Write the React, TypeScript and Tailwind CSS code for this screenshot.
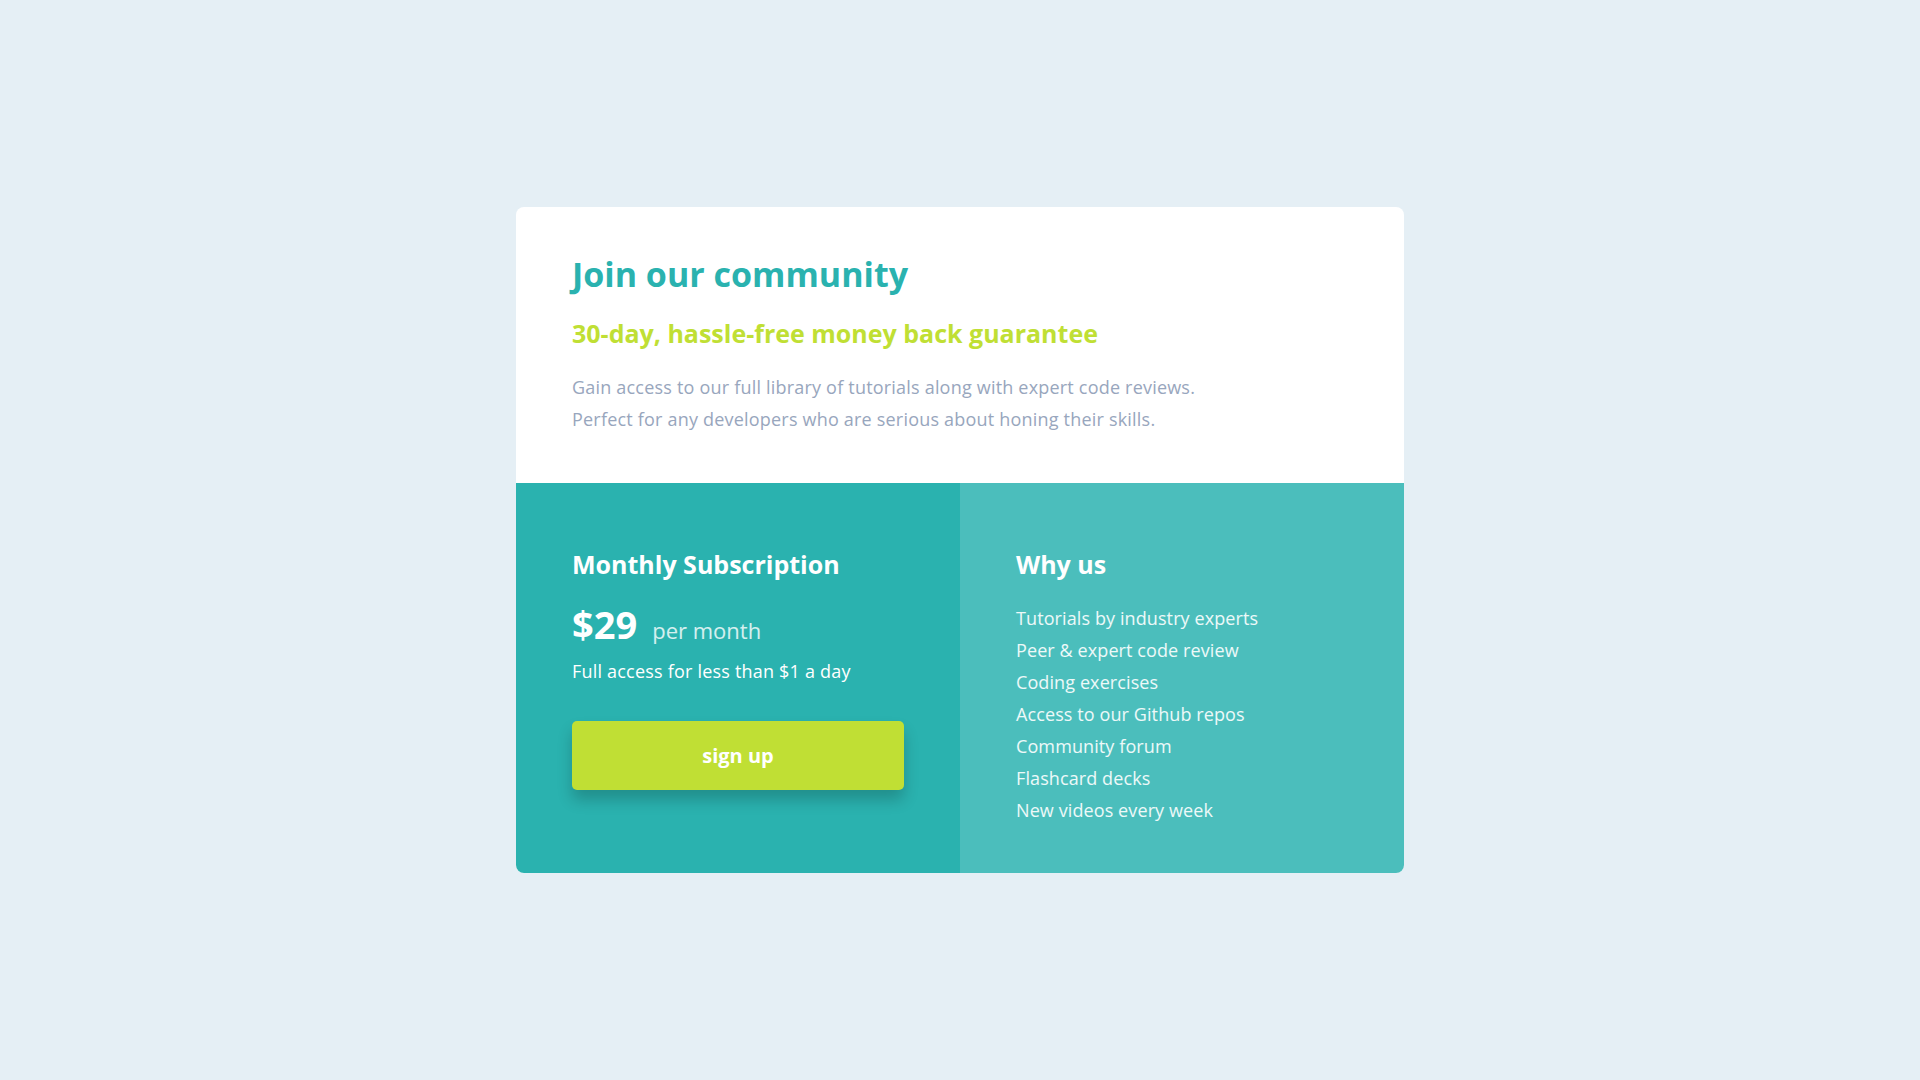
const features = [
  'Tutorials by industry experts',
  'Peer & expert code review',
  'Coding exercises',
  'Access to our Github repos',
  'Community forum',
  'Flashcard decks',
  'New videos every week',
];

const App = () => {
  return (
    <div className="flex min-h-screen justify-center bg-[#e5eff5] pt-[207px] font-['Open_Sans',sans-serif]">
      <div className="h-[666px] w-[888px] overflow-hidden rounded-lg bg-white">
        {/* Top */}
        <div className="h-[276px] px-14 pt-[47px]">
          <h1 className="text-[34px] font-bold leading-[40px] text-[#2ab2af]">
            Join our community
          </h1>
          <h2 className="mt-[25px] text-[25px] font-bold leading-[28px] text-[#c0df34]">
            30-day, hassle-free money back guarantee
          </h2>
          <p className="mt-[24px] text-[18px] leading-[32px] tracking-[0.2px] text-[#98a6bd]">
            Gain access to our full library of tutorials along with expert code reviews.
            <br />
            Perfect for any developers who are serious about honing their skills.
          </p>
        </div>

        {/* Bottom */}
        <div className="grid h-[390px] grid-cols-2 text-white">
          <div className="bg-[#2ab2af] px-14 pt-[67px]">
            <h3 className="text-[25px] font-bold leading-[28px]">Monthly Subscription</h3>
            <div className="mt-[24px] flex items-baseline gap-[15px]">
              <span className="text-[38px] font-bold leading-[44px]">$29</span>
              <span className="text-[22px] leading-none text-white/80">per month</span>
            </div>
            <p className="mt-[13px] text-[18px] leading-[24px] tracking-[0.2px]">Full access for less than $1 a day</p>
            <button className="mt-[38px] h-[69px] w-full rounded-[5px] bg-[#c0df34] text-[20px] font-bold text-white shadow-[0_10px_15px_rgba(0,0,0,0.2)]">
              sign up
            </button>
          </div>
          <div className="bg-[#4bbebc] px-14 pt-[67px]">
            <h3 className="text-[25px] font-bold leading-[28px]">Why us</h3>
            <ul className="mt-[24px] text-[18px] leading-[32px] tracking-[0.1px] text-white/90">
              {features.map((item) => (
                <li key={item}>{item}</li>
              ))}
            </ul>
          </div>
        </div>
      </div>
    </div>
  );
};

export default App;
